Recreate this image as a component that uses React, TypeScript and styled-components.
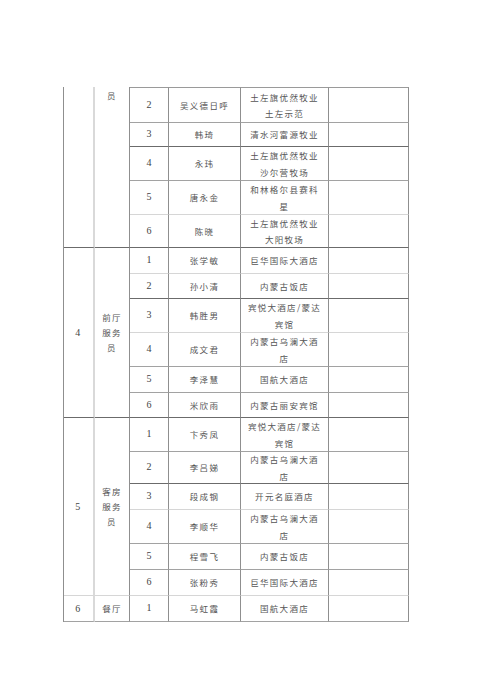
import React from "react";
import styled, { createGlobalStyle, css } from "styled-components";

type Line = "dark" | "mid" | "light";

const lineColor: Record<Line, string> = {
  dark: "#6b6b6b",
  mid: "#a2a2a2",
  light: "#d6d6d6",
};

interface Entry {
  n: string;
  name: string;
  org: string;
  h: number;
  line: Line;
}

interface Group {
  no: string;
  role: string;
  roleTop?: boolean;
  line: Line;
  rows: Entry[];
}

const groups: Group[] = [
  {
    no: "",
    role: "员",
    roleTop: true,
    line: "dark",
    rows: [
      { n: "2", name: "吴义德日呼", org: "土左旗优然牧业土左示范", h: 36, line: "mid" },
      { n: "3", name: "韩琦", org: "清水河富源牧业", h: 24, line: "dark" },
      { n: "4", name: "永玮", org: "土左旗优然牧业沙尔营牧场", h: 34, line: "mid" },
      { n: "5", name: "唐永金", org: "和林格尔县赛科星", h: 34, line: "light" },
      { n: "6", name: "陈晓", org: "土左旗优然牧业大阳牧场", h: 33, line: "dark" },
    ],
  },
  {
    no: "4",
    role: "前厅服务员",
    line: "dark",
    rows: [
      { n: "1", name: "张学敏", org: "巨华国际大酒店", h: 26, line: "light" },
      { n: "2", name: "孙小清", org: "内蒙古饭店", h: 25, line: "dark" },
      { n: "3", name: "韩胜男", org: "宾悦大酒店/蒙达宾馆", h: 34, line: "light" },
      { n: "4", name: "成文君", org: "内蒙古乌澜大酒店", h: 34, line: "mid" },
      { n: "5", name: "李泽慧", org: "国航大酒店", h: 26, line: "mid" },
      { n: "6", name: "米欣雨", org: "内蒙古丽安宾馆", h: 25, line: "dark" },
    ],
  },
  {
    no: "5",
    role: "客房服务员",
    line: "light",
    rows: [
      { n: "1", name: "卞秀凤", org: "宾悦大酒店/蒙达宾馆", h: 34, line: "mid" },
      { n: "2", name: "李吕娣", org: "内蒙古乌澜大酒店", h: 32, line: "dark" },
      { n: "3", name: "段成钢", org: "开元名庭酒店", h: 26, line: "light" },
      { n: "4", name: "李顺华", org: "内蒙古乌澜大酒店", h: 34, line: "mid" },
      { n: "5", name: "程雪飞", org: "内蒙古饭店", h: 26, line: "mid" },
      { n: "6", name: "张粉秀", org: "巨华国际大酒店", h: 26, line: "light" },
    ],
  },
  {
    no: "6",
    role: "餐厅",
    line: "mid",
    rows: [{ n: "1", name: "马虹霞", org: "国航大酒店", h: 26, line: "mid" }],
  },
];

const GlobalStyle = createGlobalStyle`
  html, body {
    margin: 0;
    background: #ffffff;
  }
`;

const Page = styled.div`
  min-height: 700px;
  padding: 87px 0 0 63px;
  box-sizing: border-box;
  background: #ffffff;
`;

const Sheet = styled.div<{ $rows: string }>`
  display: grid;
  grid-template-columns: 31px 35px 39px 72px 88px 80px;
  grid-template-rows: ${(p) => p.$rows};
  width: max-content;
  border-left: 1px solid #8f8f8f;
  font-family: "Noto Sans CJK SC", "Noto Sans", sans-serif;
  font-size: 8.5px;
  letter-spacing: 1.3px;
  color: #555;
`;

const Cell = styled.div<{ $line: Line; $top?: boolean; $serif?: boolean }>`
  box-sizing: border-box;
  display: flex;
  align-items: center;
  justify-content: center;
  text-align: center;
  padding: 0 5px;
  line-height: 16.5px;
  border-right: 1px solid #8f8f8f;
  border-bottom: 1px solid ${(p) => lineColor[p.$line]};
  ${(p) =>
    p.$top &&
    css`
      border-top: 1px solid #9a9a9a;
    `}
  ${(p) =>
    p.$serif &&
    css`
      font-family: "Liberation Serif", "Times New Roman", serif;
      font-size: 10px;
      letter-spacing: 0;
      color: #444;
    `}
`;

const NoCell = styled.div<{ $span: number; $line: Line }>`
  grid-row: span ${(p) => p.$span};
  box-sizing: border-box;
  display: flex;
  align-items: center;
  justify-content: center;
  font-family: "Liberation Serif", "Times New Roman", serif;
  font-size: 10px;
  color: #444;
  border-right: 2px solid #d9d9d9;
  border-bottom: 1px solid ${(p) => lineColor[p.$line]};
`;

const RoleCell = styled.div<{ $span: number; $line: Line; $top?: boolean }>`
  grid-row: span ${(p) => p.$span};
  box-sizing: border-box;
  display: flex;
  align-items: ${(p) => (p.$top ? "flex-start" : "center")};
  justify-content: center;
  text-align: center;
  padding: ${(p) => (p.$top ? "1px 5px 0" : "0 5px")};
  line-height: 15px;
  border-right: 1px solid #8f8f8f;
  border-bottom: 1px solid ${(p) => lineColor[p.$line]};
`;

export default function App() {
  const rows = groups
    .flatMap((g) => g.rows.map((r) => `${r.h}px`))
    .join(" ");

  return (
    <Page>
      <GlobalStyle />
      <Sheet $rows={rows}>
        {groups.map((g, gi) => (
          <React.Fragment key={gi}>
            <NoCell $span={g.rows.length} $line={g.line}>
              {g.no}
            </NoCell>
            <RoleCell $span={g.rows.length} $line={g.line} $top={g.roleTop}>
              {g.role}
            </RoleCell>
            {g.rows.map((r, ri) => {
              const top = gi === 0 && ri === 0;
              return (
                <React.Fragment key={ri}>
                  <Cell $line={r.line} $top={top} $serif>
                    {r.n}
                  </Cell>
                  <Cell $line={r.line} $top={top}>
                    {r.name}
                  </Cell>
                  <Cell $line={r.line} $top={top}>
                    {r.org}
                  </Cell>
                  <Cell $line={r.line} $top={top} />
                </React.Fragment>
              );
            })}
          </React.Fragment>
        ))}
      </Sheet>
    </Page>
  );
}
